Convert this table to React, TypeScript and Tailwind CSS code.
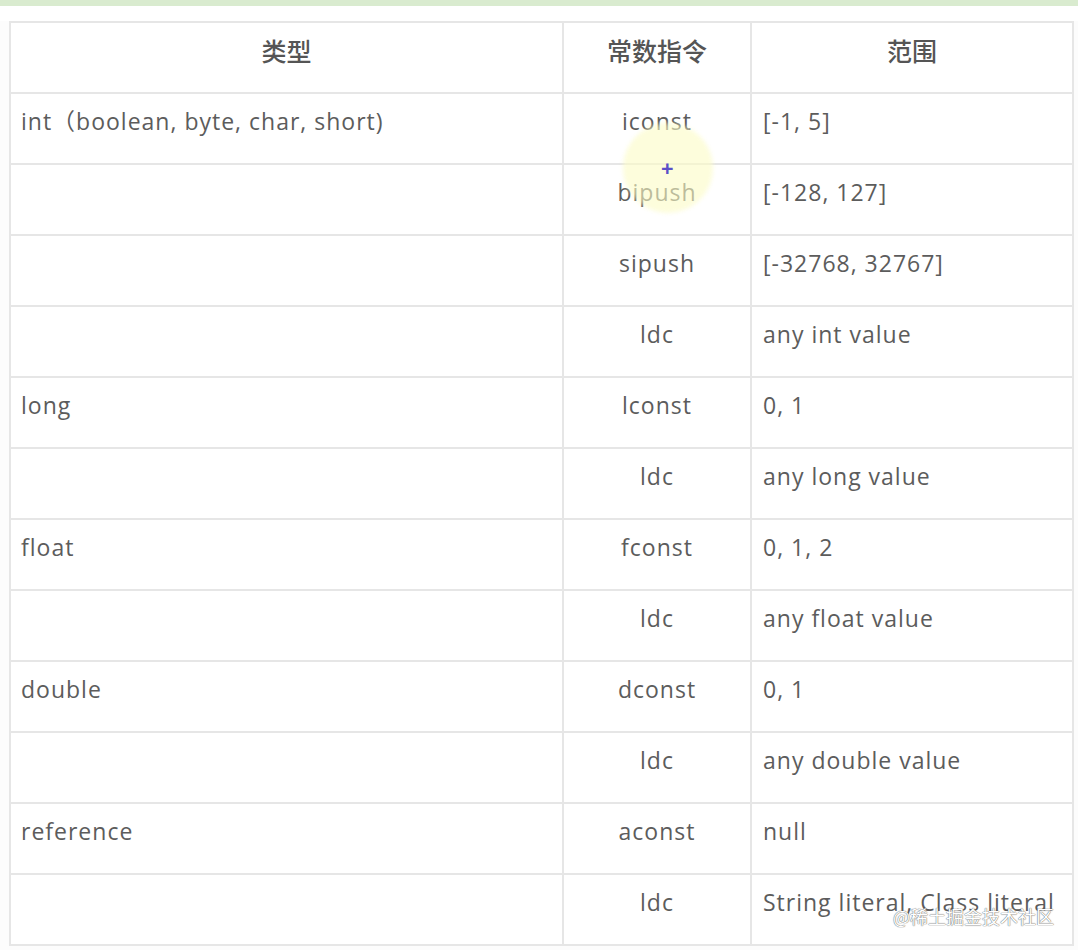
const rows: [string, string, string][] = [
  ["int（boolean, byte, char, short)", "iconst", "[-1, 5]"],
  ["", "bipush", "[-128, 127]"],
  ["", "sipush", "[-32768, 32767]"],
  ["", "ldc", "any int value"],
  ["long", "lconst", "0, 1"],
  ["", "ldc", "any long value"],
  ["float", "fconst", "0, 1, 2"],
  ["", "ldc", "any float value"],
  ["double", "dconst", "0, 1"],
  ["", "ldc", "any double value"],
  ["reference", "aconst", "null"],
  ["", "ldc", "String literal, Class literal"],
];

export default function App() {
  return (
    <div
      className="relative h-[950px] w-[1078px] overflow-hidden bg-[#fcfcfc] text-[#5c5c5c]"
      style={{ fontFamily: "'Open Sans', 'Noto Sans CJK SC', sans-serif" }}
    >
      <div className="h-[6px] bg-[#d9ebcf]" />
      <div className="h-[15px] bg-white" />
      <table className="ml-[9px] w-[1065px] table-fixed border-collapse bg-white text-[23px] tracking-[1px]">
        <colgroup>
          <col className="w-[553px]" />
          <col className="w-[188px]" />
          <col />
        </colgroup>
        <thead>
          <tr className="h-[71px]">
            {["类型", "常数指令", "范围"].map((h) => (
              <th
                key={h}
                className="border-2 border-[#e6e6e6] pb-[14px] text-center align-middle text-[25px] font-medium tracking-normal text-[#555]"
                style={{ fontFamily: "'Noto Sans CJK SC', sans-serif" }}
              >
                {h}
              </th>
            ))}
          </tr>
        </thead>
        <tbody>
          {rows.map(([t, op, range], i) => (
            <tr key={i} className="h-[71px]">
              <td className="border-2 border-[#e6e6e6] px-[10px] pb-[14px] align-middle">{t}</td>
              <td className="border-2 border-[#e6e6e6] pb-[14px] text-center align-middle">{op}</td>
              <td className="border-2 border-[#e6e6e6] px-[11px] pb-[14px] align-middle whitespace-nowrap">
                {range}
              </td>
            </tr>
          ))}
        </tbody>
      </table>

      {/* cursor highlight */}
      <div className="pointer-events-none absolute left-[623px] top-[123px] h-[90px] w-[90px] rounded-full bg-[#fbfbc4]/60 blur-[2px]" />
      <div className="pointer-events-none absolute left-[661px] top-[156px] text-[22px] font-bold leading-none text-[#5b4fc8]">
        +
      </div>

      {/* watermark */}
      <div
        className="absolute left-[893px] top-[903px] text-[18px] text-white"
        style={{
          fontFamily: "'Noto Sans CJK SC', sans-serif",
          textShadow: "0 0 1px #666, 0 0 1px #666",
        }}
      >
        @稀土掘金技术社区
      </div>
    </div>
  );
}
